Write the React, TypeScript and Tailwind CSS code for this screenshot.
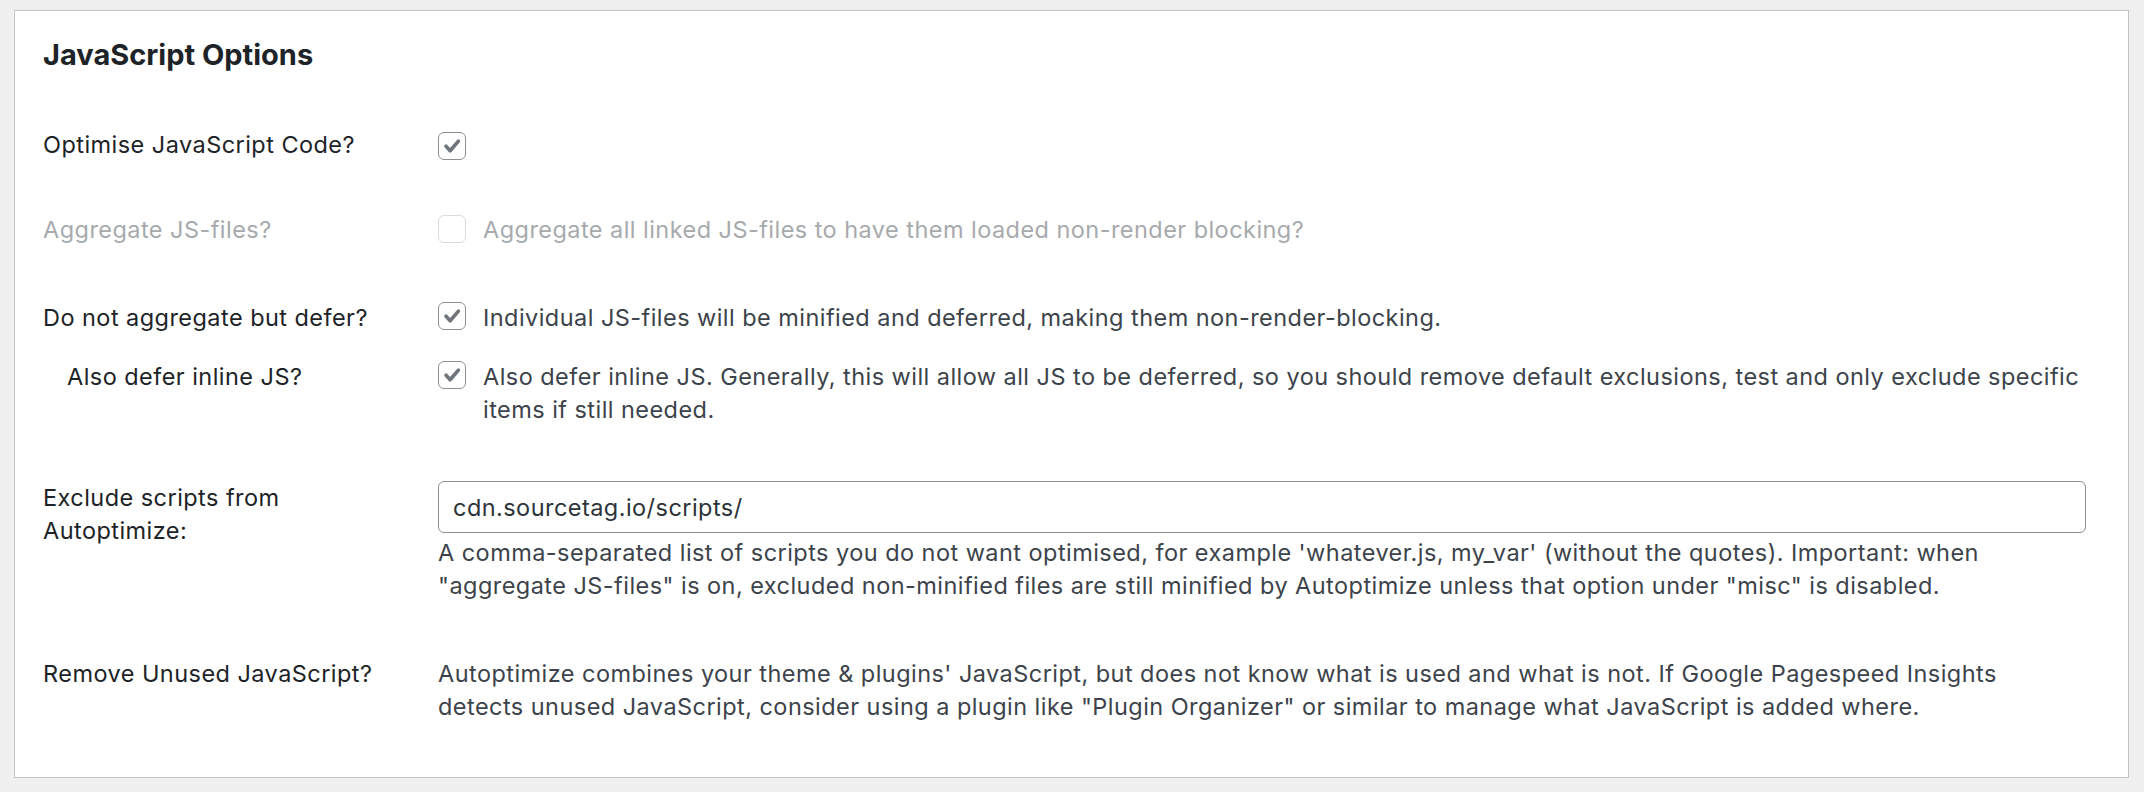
import React from 'react';

const font = { fontFamily: 'Inter, "Liberation Sans", sans-serif' };

const Check: React.FC<{ checked?: boolean; disabled?: boolean }> = ({ checked, disabled }) => (
  <span
    className={`flex h-[28px] w-[28px] shrink-0 items-center justify-center rounded-[6px] border bg-white ${
      disabled ? 'border-[#dcdcde]' : 'border-[#8c8f94]'
    }`}
  >
    {checked && (
      <svg viewBox="0 0 28 28" className="h-[28px] w-[28px]">
        <path
          d="M7.6 14.2l4.4 4.9 8.9-10.4"
          fill="none"
          stroke="#6f757b"
          strokeWidth="3.9"
          strokeLinecap="round"
          strokeLinejoin="round"
        />
      </svg>
    )}
  </span>
);

export default function App() {
  return (
    <div className="min-h-[792px] w-[2144px] bg-[#f0f0f1] pl-[14px] pr-[15px] pt-[10px] pb-[13px]" style={font}>
      <div className="border border-[#c3c4c7] bg-white pl-[28px] pr-[42px] pt-[25px] pb-[54px] text-[23.5px] leading-[33px] tracking-[0.45px] text-[#3c434a]">
        {/* Section heading */}
        <h2 className="text-[29px] font-bold leading-[38px] tracking-normal text-[#1d2327]">JavaScript Options</h2>

        {/* Optimise toggle */}
        <div className="mt-[54px] flex">
          <div className="w-[395px] shrink-0 text-[#1d2327]">Optimise JavaScript Code?</div>
          <div className="pt-[4px]">
            <Check checked />
          </div>
        </div>

        {/* Aggregate (disabled) */}
        <div className="mt-[52px] flex">
          <div className="w-[395px] shrink-0 text-[#a7aaad]">Aggregate JS-files?</div>
          <div className="flex gap-[17px] text-[#a7aaad]">
            <span className="pt-[2px]">
              <Check disabled />
            </span>
            <span>Aggregate all linked JS-files to have them loaded non-render blocking?</span>
          </div>
        </div>

        {/* Defer */}
        <div className="mt-[55px] flex">
          <div className="w-[395px] shrink-0 text-[#1d2327]">Do not aggregate but defer?</div>
          <div className="flex gap-[17px]">
            <span className="pt-[1px]">
              <Check checked />
            </span>
            <span>Individual JS-files will be minified and deferred, making them non-render-blocking.</span>
          </div>
        </div>

        <div className="mt-[26px] flex">
          <div className="w-[395px] shrink-0 pl-[24px] text-[#1d2327]">Also defer inline JS?</div>
          <div className="flex gap-[17px]">
            <span className="pt-[1px]">
              <Check checked />
            </span>
            <span>
              Also defer inline JS. Generally, this will allow all JS to be deferred, so you should remove default
              exclusions, test and only exclude specific
              <br />
              items if still needed.
            </span>
          </div>
        </div>

        {/* Exclusions */}
        <div className="mt-[55px] flex">
          <div className="w-[395px] shrink-0 text-[#1d2327]">
            Exclude scripts from
            <br />
            Autoptimize:
          </div>
          <div className="min-w-0 flex-1">
            <input
              type="text"
              defaultValue="cdn.sourcetag.io/scripts/"
              className="block h-[52px] w-full rounded-[6px] border border-[#8c8f94] bg-white px-[14px] text-[23.5px] tracking-[0.45px] text-[#2c3338] outline-none"
              style={font}
            />
            <p className="mt-[3px]">
              A comma-separated list of scripts you do not want optimised, for example 'whatever.js, my_var' (without
              the quotes). Important: when
              <br />
              "aggregate JS-files" is on, excluded non-minified files are still minified by Autoptimize unless that
              option under "misc" is disabled.
            </p>
          </div>
        </div>

        {/* Unused JS */}
        <div className="mt-[55px] flex">
          <div className="w-[395px] shrink-0 text-[#1d2327]">Remove Unused JavaScript?</div>
          <p className="min-w-0 flex-1">
            Autoptimize combines your theme &amp; plugins' JavaScript, but does not know what is used and what is not.
            If Google Pagespeed Insights
            <br />
            detects unused JavaScript, consider using a plugin like "Plugin Organizer" or similar to manage what
            JavaScript is added where.
          </p>
        </div>
      </div>
    </div>
  );
}
